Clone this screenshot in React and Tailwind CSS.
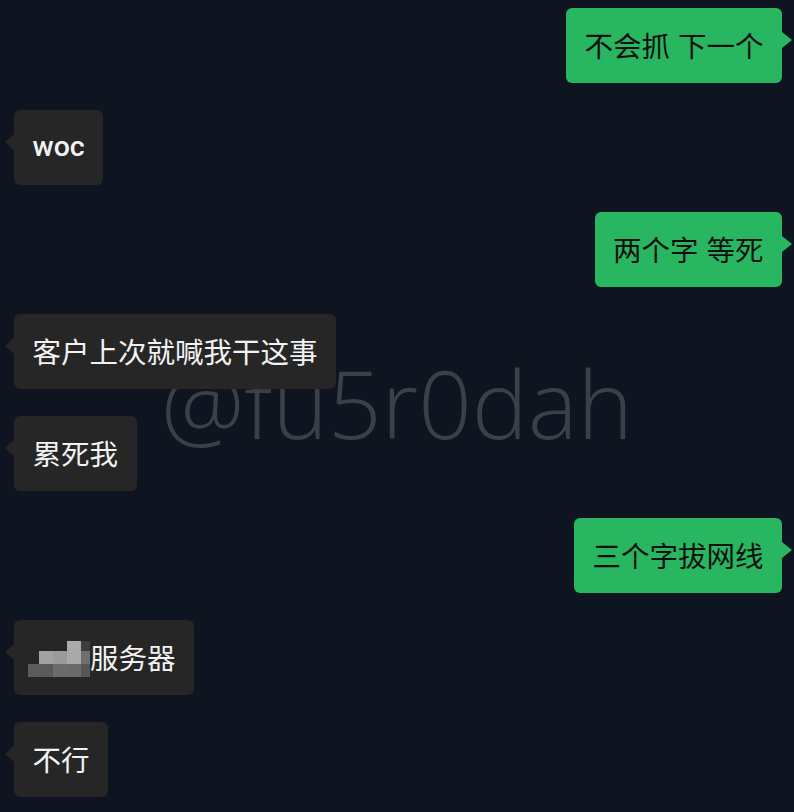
const cjk = { fontFamily: '"Noto Sans CJK SC", "Noto Sans", sans-serif' };

const messages = [
  { side: "right", text: "不会抓 下一个" },
  { side: "left", text: "woc", latin: true },
  { side: "right", text: "两个字 等死" },
  { side: "left", text: "客户上次就喊我干这事" },
  { side: "left", text: "累死我" },
  { side: "right", text: "三个字拔网线" },
  { side: "left", text: "服务器", mosaic: true },
  { side: "left", text: "不行" },
];

// pixelated blur in front of "服务器"
const mosaic = [
  [null, null, null, "#aaaaaa", "#3d3d3d"],
  [null, "#a2a2a2", "#9b9b9b", "#a9a9a9", "#6f6f6f"],
  ["#5c5c5c", "#5a5a5a", "#6c6c6c", "#6a6a6a", "#565656"],
];
const colW = [11, 14, 14, 14, 9];

function Mosaic() {
  return (
    <div className="flex flex-col -ml-[4.5px] mt-[2px]">
      {mosaic.map((row, r) => (
        <div key={r} className={r === 0 ? "flex h-[10px]" : "flex h-[13px]"}>
          {row.map((c, i) => (
            <div key={i} style={{ width: colW[i], background: c || "transparent" }} />
          ))}
        </div>
      ))}
    </div>
  );
}

function Bubble({ side, text, latin, mosaic }) {
  const right = side === "right";
  return (
    <div className={right ? "flex justify-end" : "flex justify-start"}>
      <div
        className={
          right
            ? "relative h-[75px] flex items-center px-[18.5px] rounded-[6px] bg-[#28b660] text-[#111111]"
            : "relative h-[75px] flex items-center px-[18.5px] rounded-[6px] bg-[#262626] text-[#f2f2f2]"
        }
      >
        {right ? (
          <span className="absolute top-[24px] -right-[10px] w-0 h-0 border-y-[8px] border-y-transparent border-l-[10px] border-l-[#28b660]" />
        ) : (
          <span className="absolute top-[24px] -left-[9px] w-0 h-0 border-y-[8px] border-y-transparent border-r-[9px] border-r-[#262626]" />
        )}
        {mosaic && <Mosaic />}
        {latin ? (
          <span
            className="text-[28.5px] leading-none font-medium"
            style={{ fontFamily: 'Roboto, "Noto Sans CJK SC", sans-serif' }}
          >
            {text}
          </span>
        ) : (
          <span className="text-[28.5px] leading-none whitespace-pre [word-spacing:1.5px]" style={cjk}>
            {text}
          </span>
        )}
      </div>
    </div>
  );
}

export default function App() {
  return (
    <div className="relative w-[794px] h-[812px] overflow-hidden bg-[#0f1520]">
      <div
        className="absolute inset-x-0 top-[356px] text-center text-[94px] leading-none font-light text-[#3b3f46] select-none"
        style={{ fontFamily: '"Open Sans", "Noto Sans", sans-serif' }}
      >
        @fu5r0dah
      </div>
      <div className="relative flex flex-col gap-[27px] pt-[8px] pl-[14px] pr-[12px]">
        {messages.map((m, i) => (
          <Bubble key={i} {...m} />
        ))}
      </div>
    </div>
  );
}
